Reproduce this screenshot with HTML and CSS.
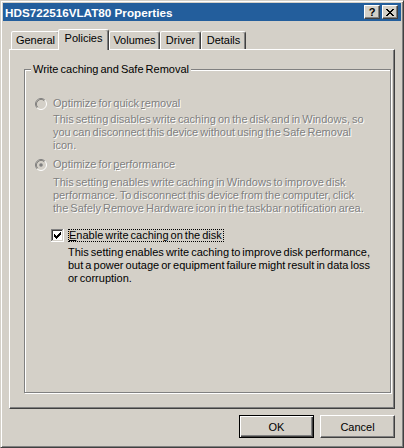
FILE: index.html
```html
<!DOCTYPE html>
<html>
<head>
<meta charset="utf-8">
<title>HDS722516VLAT80 Properties</title>
<link rel="stylesheet" href="styles.css">
</head>
<body>
<div class="window">
  <div class="titlebar">
    <span class="title">HDS722516VLAT80 Properties</span>
    <div class="caption-buttons">
      <div class="cap-btn help">?</div>
      <div class="cap-btn close">
        <svg width="8" height="7" viewBox="0 0 8 7" shape-rendering="crispEdges"><path fill="#000" d="M0 0h2v1H0z M6 0h2v1H6z M1 1h2v1H1z M5 1h2v1H5z M2 2h4v1H2z M3 3h2v1H3z M2 4h4v1H2z M1 5h2v1H1z M5 5h2v1H5z M0 6h2v1H0z M6 6h2v1H6z"/></svg>
      </div>
    </div>
  </div>
  <div class="client">
    <div class="tabs">
      <div class="tab w-general">General</div>
      <div class="tab active w-policies">Policies</div>
      <div class="tab w-volumes">Volumes</div>
      <div class="tab w-driver">Driver</div>
      <div class="tab w-details">Details</div>
    </div>
    <div class="panel">
      <div class="group">
        <div class="group-title">Write caching and Safe Removal</div>

        <div class="option radio-row r1">
          <svg class="radio" width="12" height="12" viewBox="0 0 12 12">
            <path d="M2.11 9.89A5.5 5.5 0 0 1 9.89 2.11" fill="none" stroke="#808080"/>
            <path d="M9.89 2.11A5.5 5.5 0 0 1 2.11 9.89" fill="none" stroke="#fff"/>
            <circle cx="6" cy="6" r="4" fill="#d4d0c8"/>
            <path d="M2.82 9.18A4.5 4.5 0 0 1 9.18 2.82" fill="none" stroke="#404040" stroke-opacity="0.5"/>
          </svg>
          <span class="disabled">Optimize for quick <u>r</u>emoval</span>
        </div>
        <div class="desc disabled d1">This setting disables write caching on the disk and in Windows, so<br>you can disconnect this device without using the Safe Removal<br>icon.</div>

        <div class="option radio-row r2">
          <svg class="radio" width="12" height="12" viewBox="0 0 12 12">
            <path d="M2.11 9.89A5.5 5.5 0 0 1 9.89 2.11" fill="none" stroke="#808080"/>
            <path d="M9.89 2.11A5.5 5.5 0 0 1 2.11 9.89" fill="none" stroke="#fff"/>
            <circle cx="6" cy="6" r="4" fill="#d4d0c8"/>
            <path d="M2.82 9.18A4.5 4.5 0 0 1 9.18 2.82" fill="none" stroke="#404040" stroke-opacity="0.5"/>
            <circle cx="6" cy="6" r="1.8" fill="#808080"/>
          </svg>
          <span class="disabled">Optimize for <u>p</u>erformance</span>
        </div>
        <div class="desc disabled d2">This setting enables write caching in Windows to improve disk<br>performance. To disconnect this device from the computer, click<br>the Safely Remove Hardware icon in the taskbar notification area.</div>

        <div class="option check-row">
          <svg class="checkbox" width="13" height="13" viewBox="0 0 13 13" shape-rendering="crispEdges">
            <rect x="0" y="0" width="13" height="13" fill="#fff"/>
            <path fill="#808080" d="M0 0h12v1H0z M0 1h1v11H0z"/>
            <path fill="#404040" d="M1 1h10v1H1z M1 2h1v9H1z"/>
            <path fill="#d4d0c8" d="M1 11h11v1H1z M11 1h1v10h-1z"/>
            <path fill="#fff" d="M0 12h13v1H0z M12 0h1v12h-1z"/>
            <path fill="#000" d="M3 5h1v3H3z M4 6h1v3H4z M5 7h1v3H5z M6 6h1v3H6z M7 5h1v3H7z M8 4h1v3H8z M9 3h1v3H9z"/>
          </svg>
          <span class="focus"><u>E</u>nable write caching on the disk</span>
        </div>
        <div class="desc d3">This setting enables write caching to improve disk performance,<br>but a power outage or equipment failure might result in data loss<br>or corruption.</div>
      </div>
    </div>
    <div class="footer">
      <button class="btn default">OK</button>
      <button class="btn">Cancel</button>
    </div>
  </div>
</div>
</body>
</html>
```

FILE: styles.css
```css
html, body {
  margin: 0;
  padding: 0;
  background: #d4d0c8;
}
body {
  width: 404px;
  height: 448px;
  overflow: hidden;
  font-family: "Liberation Sans", Arial, sans-serif;
  font-size: 11px;
  word-spacing: -1px;
  color: #000;
}
.window {
  box-sizing: border-box;
  width: 404px;
  height: 448px;
  background: #d4d0c8;
  border: 1px solid;
  border-color: #d4d0c8 #404040 #404040 #d4d0c8;
  box-shadow: inset 1px 1px #fff, inset -1px -1px #808080;
  padding: 2px;
  display: flex;
  flex-direction: column;
}
.titlebar {
  height: 18px;
  background: #235e9c;
  display: flex;
  align-items: center;
  justify-content: space-between;
  padding-left: 2px;
}
.title {
  color: #fff;
  font-weight: bold;
  font-size: 11.7px;
  word-spacing: 0;
  white-space: nowrap;
}
.caption-buttons {
  display: flex;
  gap: 2px;
  margin-right: 3px;
}
.cap-btn {
  box-sizing: border-box;
  width: 16px;
  height: 14px;
  background: #d4d0c8;
  border: 1px solid;
  border-color: #fff #404040 #404040 #fff;
  box-shadow: inset -1px -1px #808080;
  display: flex;
  align-items: center;
  justify-content: center;
}
.cap-btn.help {
  font-weight: bold;
  font-size: 11px;
  line-height: 12px;
  padding-bottom: 1px;
}
.client {
  flex: 1;
  display: flex;
  flex-direction: column;
  padding: 8px 6px 0 6px;
}
.tabs {
  height: 20px;
  display: flex;
  align-items: flex-end;
  padding-left: 2px;
}
.tab {
  box-sizing: border-box;
  height: 18px;
  border: 1px solid;
  border-bottom: 0;
  border-color: #fff #404040 transparent #fff;
  border-radius: 2px 3px 0 0;
  box-shadow: inset -1px 0 #808080;
  text-align: center;
  line-height: 17px;
  white-space: nowrap;
  background: #d4d0c8;
}
.tab.active {
  height: 21px;
  margin: 0 0 -1px -2px;
  position: relative;
  z-index: 1;
}
.w-general { width: 49px; }
.w-policies { width: 51px; }
.w-volumes { width: 51px; }
.w-driver { width: 41px; }
.w-details { width: 45px; }
.panel {
  box-sizing: border-box;
  height: 360px;
  border: 1px solid;
  border-color: #fff #404040 #404040 #fff;
  box-shadow: inset -1px -1px #808080;
  padding: 19px 3px 15px 14px;
}
.group {
  box-sizing: border-box;
  height: 324px;
  border: 1px solid #808080;
  box-shadow: inset 1px 1px #fff, 1px 1px #fff;
  display: flex;
  flex-direction: column;
  align-items: flex-start;
}
.group-title {
  margin: -7px 0 0 6px;
  padding: 0 2px;
  background: #d4d0c8;
  line-height: 13px;
  white-space: nowrap;
}
.option {
  display: flex;
  align-items: center;
  height: 13px;
  line-height: 13px;
  white-space: nowrap;
}
.radio-row { margin-left: 10px; }
.radio { margin-right: 6px; flex: none; }
.r1 { margin-top: 21px; }
.r2 { margin-top: 6px; }
.check-row { margin: 14px 0 0 26px; }
.checkbox { flex: none; }
.focus {
  display: inline-block;
  margin-left: 4px;
  padding: 0 1px 0 0;
  border: 1px dotted #000;
  line-height: 11px;
}
.desc {
  line-height: 13px;
  white-space: nowrap;
}
.d1 { margin: 3px 0 0 28px; }
.d2 { margin: 5px 0 0 28px; }
.d3 { margin: 4px 0 0 43px; }
.disabled {
  color: #808080;
  text-shadow: 1px 1px 0 #fff;
}
.footer {
  display: flex;
  justify-content: flex-end;
  gap: 6px;
  margin-top: 6px;
}
.btn {
  box-sizing: border-box;
  width: 75px;
  height: 23px;
  padding: 0;
  background: #d4d0c8;
  border: 1px solid;
  border-color: #fff #404040 #404040 #fff;
  box-shadow: inset -1px -1px #808080;
  font-family: "Liberation Sans", Arial, sans-serif;
  font-size: 11px;
  color: #000;
}
.btn.default {
  border-color: #000;
  box-shadow: inset 1px 1px #fff, inset -1px -1px #404040, inset -2px -2px #808080;
}
```
